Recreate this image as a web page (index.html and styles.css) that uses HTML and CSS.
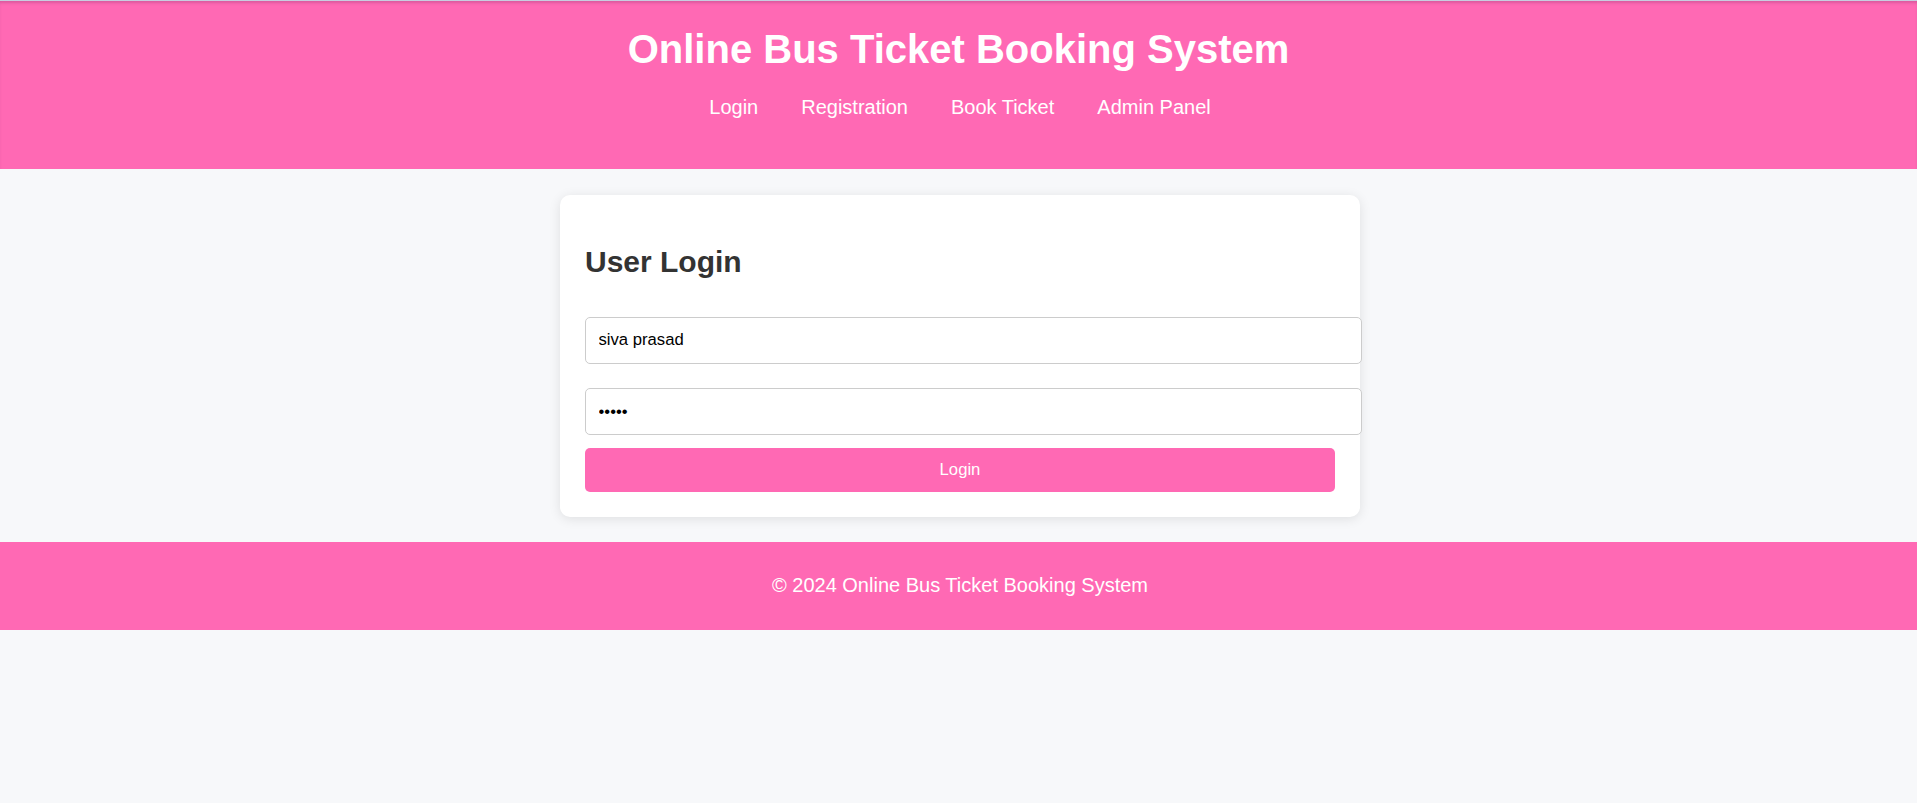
FILE: index.html
```html
<!DOCTYPE html>
<html lang="en">
<head>
<meta charset="utf-8">
<title>Online Bus Ticket Booking System</title>
<link rel="stylesheet" href="styles.css">
</head>
<body>
<header class="site-header">
  <h1 class="site-title">Online Bus Ticket Booking System</h1>
  <nav class="site-nav">
    <a href="#" class="nav-link">Login</a>
    <a href="#" class="nav-link">Registration</a>
    <a href="#" class="nav-link">Book Ticket</a>
    <a href="#" class="nav-link">Admin Panel</a>
  </nav>
</header>
<main class="main">
  <section class="card">
    <h2 class="card-title">User Login</h2>
    <form class="login-form">
      <input class="field" type="text" value="siva prasad">
      <input class="field" type="password" value="12345">
      <button class="btn" type="button">Login</button>
    </form>
  </section>
</main>
<footer class="site-footer">
  <p class="footer-text">© 2024 Online Bus Ticket Booking System</p>
</footer>
</body>
</html>
```
FILE: styles.css
```css
* { box-sizing: content-box; }
html, body { margin: 0; padding: 0; }
body {
  background: #f7f8fa;
  font-family: "Liberation Sans", Arial, sans-serif;
  font-size: 20px;
  color: #333;
  padding-left: 3px;
}
.site-header {
  margin-left: -3px;
  background: #ff69b4;
  border-top: 1px solid #c9cde0;
  box-shadow: inset 0 3px 3px -1px rgba(90, 30, 80, 0.22);
  padding: 25px 0 50px;
  text-align: center;
  color: #fff;
}
.site-title {
  margin: 0 0 24px;
  font-size: 40px;
  line-height: 46px;
  font-weight: bold;
}
.site-nav {
  display: flex;
  justify-content: center;
  gap: 43px;
  height: 23px;
  line-height: 23px;
  padding-left: 3px;
}
.nav-link {
  color: #fff;
  text-decoration: none;
  font-size: 20px;
}
.main {
  padding: 26px 0 25px;
}
.card {
  width: 750px;
  margin: 0 auto;
  padding: 25px;
  background: #fff;
  border-radius: 10px;
  box-shadow: 0 2px 12px rgba(0, 0, 0, 0.1);
}
.card-title {
  margin: 25px 0;
  font-size: 30px;
  line-height: 34.5px;
  font-weight: bold;
  color: #333;
}
.login-form {
  display: flex;
  flex-direction: column;
  align-items: flex-start;
}
.field {
  width: 100%;
  margin: 12px 0 12.5px;
  padding: 12.5px;
  height: 20px;
  border: 1px solid #ccc;
  border-radius: 5px;
  font-family: "Liberation Sans", Arial, sans-serif;
  font-size: 16.67px;
  color: #000;
  background: #fff;
  outline: none;
}
.btn {
  width: 100%;
  padding: 12.5px 0;
  height: 19.2px;
  border: none;
  border-radius: 5px;
  background: #ff69b4;
  color: #fff;
  font-family: "Liberation Sans", Arial, sans-serif;
  font-size: 16.67px;
  line-height: 19.2px;
  cursor: pointer;
}
.site-footer {
  margin-left: -3px;
  background: #ff69b4;
  padding: 12.5px;
  text-align: center;
  color: #fff;
}
.footer-text {
  margin: 20px 0;
  font-size: 20px;
  line-height: 23px;
  padding-left: 3px;
}
```
